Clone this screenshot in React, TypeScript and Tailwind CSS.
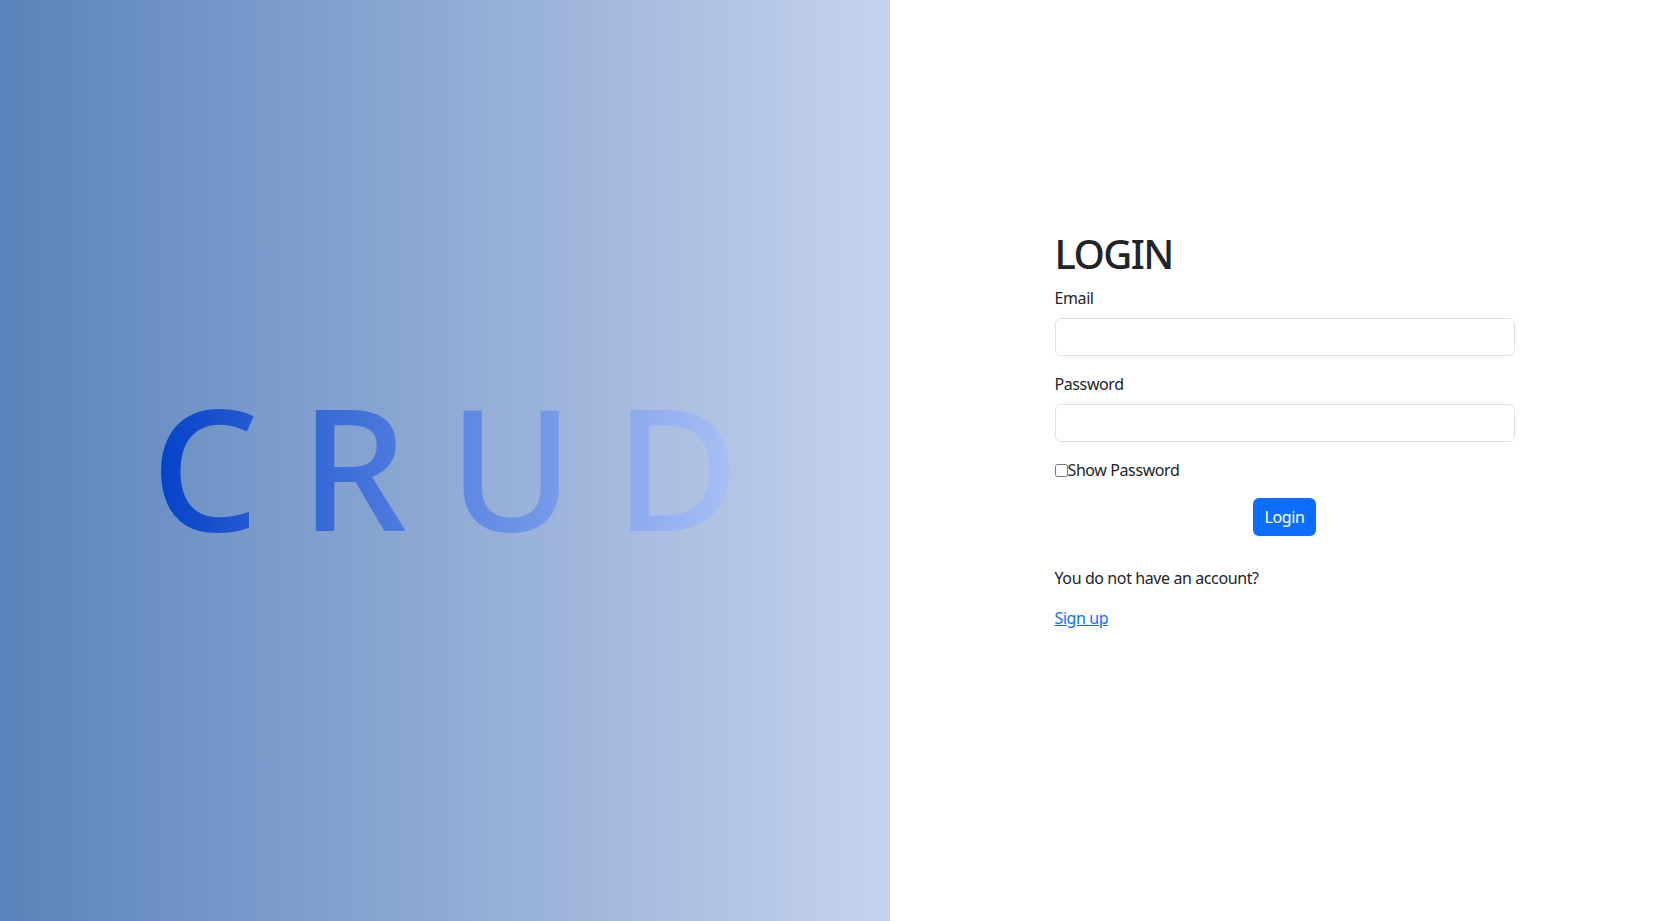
import React, { useState } from "react";

export default function App() {
  const [show, setShow] = useState(false);
  return (
    <div
      className="flex h-[921px] w-full overflow-hidden bg-white text-[#212529]"
      style={{ fontFamily: '"Noto Sans", "Open Sans", sans-serif' }}
    >
      <div className="flex h-full w-[890px] shrink-0 items-center bg-gradient-to-r from-[#5a83bb] to-[#c6d3ed] pl-[151px] pt-[9px]">
        <span className="inline-block bg-gradient-to-r from-[#0040c8] to-[#b6c8f8] bg-clip-text text-[170px] font-medium leading-none tracking-[41px] text-transparent">
          CRUD
        </span>
      </div>
      <div className="flex flex-1 justify-center pt-[230px] tracking-[-0.025em]">
        <div className="w-[460px]">
          <h1 className="mb-2 text-[40px] font-medium leading-[1.2] tracking-[-0.04em]">LOGIN</h1>
          <div className="mb-4">
            <label className="mb-2 block text-base leading-6">Email</label>
            <input
              type="email"
              className="block h-[38px] w-full rounded-[6px] border border-[#dee2e6] bg-white px-3 text-base outline-none"
            />
          </div>
          <div className="mb-4">
            <label className="mb-2 block text-base leading-6">Password</label>
            <input
              type={show ? "text" : "password"}
              className="block h-[38px] w-full rounded-[6px] border border-[#dee2e6] bg-white px-3 text-base outline-none"
            />
          </div>
          <label className="flex h-6 items-center text-base leading-6">
            <input
              type="checkbox"
              checked={show}
              onChange={(e) => setShow(e.target.checked)}
              className="m-0 h-[13px] w-[13px]"
            />
            <span>Show Password</span>
          </label>
          <div className="mt-4 flex justify-center">
            <button className="h-[38px] rounded-[6px] bg-[#0d6efd] px-3 text-base leading-6 text-white">
              Login
            </button>
          </div>
          <p className="mt-[30px] mb-4 text-base leading-6">You do not have an account?</p>
          <a href="#" className="text-base leading-6 text-[#0d6efd] underline">
            Sign up
          </a>
        </div>
      </div>
    </div>
  );
}
